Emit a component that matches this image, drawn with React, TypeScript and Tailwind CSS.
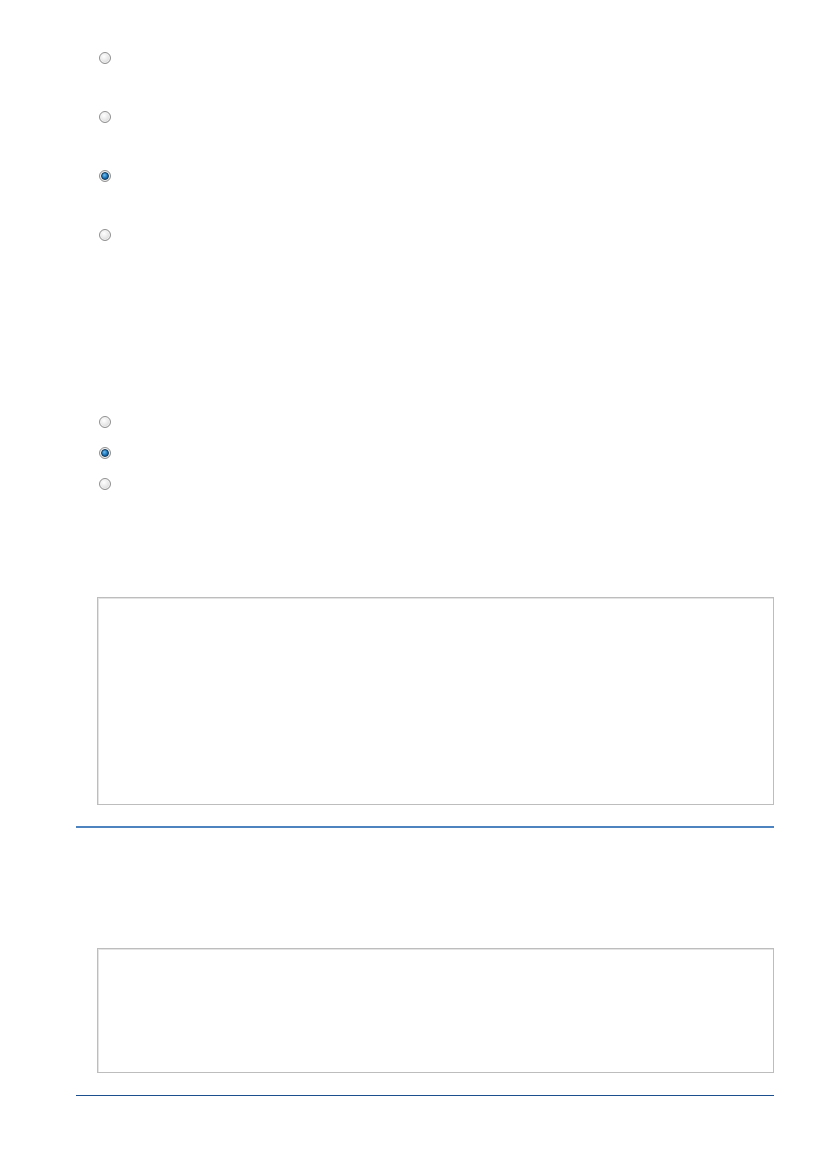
import React from "react";

function Radio({ checked = false }: { checked?: boolean }) {
  return (
    <div className="flex h-[12px] w-[12px] items-center justify-center rounded-full border border-[#8f8f8f] bg-[radial-gradient(circle_at_40%_35%,#ffffff_0%,#e8e8e8_50%,#c4c4c4_100%)] shadow-[inset_0_0_0_1px_#f4f4f4]">
      {checked && (
        <div className="h-[8px] w-[8px] rounded-full border border-[#0b3557] bg-[radial-gradient(circle_at_40%_35%,#6cbcf0_0%,#1a72b8_55%,#0b4d86_100%)]" />
      )}
    </div>
  );
}

export default function App() {
  return (
    <div className="min-h-[1169px] w-[827px] bg-white font-['Liberation_Sans',sans-serif]">
      <div className="ml-[76px] w-[698px] pt-[52px]">
        {/* first group */}
        <div className="flex flex-col gap-[47px] pl-[23px]">
          <Radio />
          <Radio />
          <Radio checked />
          <Radio />
        </div>

        {/* second group */}
        <div className="mt-[175px] flex flex-col gap-[19px] pl-[23px]">
          <Radio />
          <Radio checked />
          <Radio />
        </div>

        {/* text area */}
        <div className="ml-[21px] mt-[107px] h-[208px] border border-[#bdbdbd] bg-white shadow-[inset_1px_1px_0_#e4e4e4]" />

        <div className="mt-[21px] h-[2px] bg-[#4d84bf]" />

        {/* second text area */}
        <div className="ml-[21px] mt-[120px] h-[125px] border border-[#bdbdbd] bg-white shadow-[inset_1px_1px_0_#e4e4e4]" />

        <div className="mt-[22px] h-[1px] bg-[#1c4f8e]" />
      </div>
    </div>
  );
}
